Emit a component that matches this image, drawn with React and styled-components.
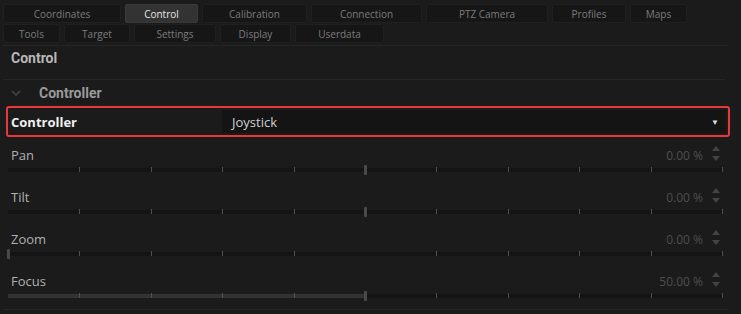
import React from 'react';
import styled, { createGlobalStyle } from 'styled-components';

const TABS_TOP = [
  { name: 'Coordinates', width: 118 },
  { name: 'Control', width: 73, active: true },
  { name: 'Calibration', width: 105 },
  { name: 'Connection', width: 111 },
  { name: 'PTZ Camera', width: 122 },
  { name: 'Profiles', width: 74 },
  { name: 'Maps', width: 57 },
];

const TABS_BOTTOM = [
  { name: 'Tools', width: 57 },
  { name: 'Target', width: 66 },
  { name: 'Settings', width: 82 },
  { name: 'Display', width: 71 },
  { name: 'Userdata', width: 89 },
];

const SLIDERS = [
  { name: 'Pan', value: 0, pos: 50 },
  { name: 'Tilt', value: 0, pos: 50 },
  { name: 'Zoom', value: 0, pos: 0 },
  { name: 'Focus', value: 50, pos: 50, filled: true },
];

const GlobalStyle = createGlobalStyle`
  html, body {
    margin: 0;
    padding: 0;
    background: #1b1b1b;
  }
  body {
    font-family: "Open Sans", "Liberation Sans", sans-serif;
    width: 741px;
    height: 314px;
    overflow: hidden;
  }
`;

const Page = styled.div`
  width: 741px;
  height: 314px;
  background: #1b1b1b;
  padding: 4px 14px 0 3px;
  box-sizing: border-box;
`;

const TabBar = styled.div`
  display: flex;
  flex-direction: column;
  gap: 1px;
  padding-bottom: 2px;
  border-bottom: 1px solid #262626;
`;

const TabRow = styled.div`
  display: flex;
  gap: 4px;
`;

const Tab = styled.div`
  width: ${(p) => p.$width}px;
  height: 19px;
  box-sizing: border-box;
  display: flex;
  align-items: center;
  justify-content: center;
  font-size: 10px;
  border: 1px solid ${(p) => (p.$active ? '#3a3a3a' : '#202020')};
  border-radius: 2px;
  background: ${(p) => (p.$active ? '#333333' : '#161616')};
  color: ${(p) => (p.$active ? '#e6e6e6' : '#7c7c7c')};
`;

const SectionTitle = styled.div`
  height: 34px;
  box-sizing: border-box;
  padding: 2px 0 0 8px;
  line-height: 20px;
  font-family: Roboto, "Liberation Sans", sans-serif;
  font-weight: 700;
  font-size: 14px;
  color: #b8b8b8;
  border-bottom: 1px solid #262626;
  margin-right: 2px;
`;

const GroupHeader = styled.div`
  height: 26px;
  display: flex;
  align-items: center;
  gap: 18px;
  padding-left: 8px;
  font-family: Roboto, "Liberation Sans", sans-serif;
  font-weight: 700;
  font-size: 14px;
  color: #9a9a9a;
`;

const PropertyBox = styled.div`
  height: 31px;
  margin: 0 -3px 0 3px;
  box-sizing: border-box;
  border: 2px solid #e83838;
  border-radius: 3px;
  display: flex;
  align-items: center;
  padding: 0 2px 0 3px;
`;

const PropertyLabel = styled.div`
  width: 211px;
  font-weight: 700;
  font-size: 13px;
  color: #f0f0f0;
`;

const Select = styled.div`
  flex: 1;
  height: 23px;
  background: #141414;
  display: flex;
  align-items: center;
  justify-content: space-between;
  padding: 0 7px 0 10px;
  font-size: 13px;
  color: #d0d0d0;
`;

const Arrow = styled.span`
  font-size: 8px;
  color: #dcdcdc;
`;

const SliderRow = styled.div`
  height: ${(p) => (p.$last ? 47 : 42)}px;
  display: flex;
  flex-direction: column;
  padding: 10px 0 0 5px;
  box-sizing: border-box;
  border-bottom: 1px solid ${(p) => (p.$last ? '#262626' : 'transparent')};
`;

const SliderHead = styled.div`
  height: 16px;
  display: flex;
  align-items: center;
`;

const SliderLabel = styled.div`
  flex: 1;
  font-size: 13px;
  color: #b0b0b0;
  padding-left: 3px;
`;

const SliderValue = styled.div`
  font-size: 12px;
  color: #4e4e4e;
  margin-right: 9px;
`;

const Spinner = styled.div`
  width: 8px;
  display: flex;
  flex-direction: column;
  gap: 5px;
  margin-right: 7px;
  margin-top: -4px;
`;

const Track = styled.div`
  position: relative;
  margin: 5px 5px 0 0;
  height: 4px;
  background: #141414;
`;

const Fill = styled.div`
  position: absolute;
  left: 0;
  top: 0;
  bottom: 0;
  background: #333333;
`;

const Tick = styled.div`
  position: absolute;
  top: -1px;
  width: 1px;
  height: 5px;
  background: #4f4f4f;
`;

const Thumb = styled.div`
  position: absolute;
  top: -3px;
  width: 3px;
  height: 10px;
  margin-left: -1px;
  background: #4a4a4a;
  border-radius: 1px;
`;

const Chevron = () => (
  <svg width="10" height="6" viewBox="0 0 10 6">
    <path d="M1 1 L5 5 L9 1" fill="none" stroke="#444" strokeWidth="1.6" />
  </svg>
);

const Triangle = ({ up }) => (
  <svg width="8" height="5" viewBox="0 0 8 5">
    <path d={up ? 'M0 5 L4 0 L8 5 Z' : 'M0 0 L4 5 L8 0 Z'} fill="#444" />
  </svg>
);

const Slider = ({ name, value, pos, filled, last }) => (
  <SliderRow $last={last}>
    <SliderHead>
      <SliderLabel>{name}</SliderLabel>
      <SliderValue>{value.toFixed(2)} %</SliderValue>
      <Spinner>
        <Triangle up />
        <Triangle />
      </Spinner>
    </SliderHead>
    <Track>
      {filled && <Fill style={{ width: `${pos}%` }} />}
      {[10, 20, 30, 40, 60, 70, 80, 90, 100].map((t) => (
        <Tick key={t} style={{ left: `${t}%` }} />
      ))}
      <Thumb style={{ left: `${pos}%` }} />
    </Track>
  </SliderRow>
);

const App = () => {
  return (
    <>
      <GlobalStyle />
      <Page>
        <TabBar>
          <TabRow>
            {TABS_TOP.map((t) => (
              <Tab key={t.name} $width={t.width} $active={t.active}>
                {t.name}
              </Tab>
            ))}
          </TabRow>
          <TabRow>
            {TABS_BOTTOM.map((t) => (
              <Tab key={t.name} $width={t.width}>
                {t.name}
              </Tab>
            ))}
          </TabRow>
        </TabBar>
        <SectionTitle>Control</SectionTitle>
        <GroupHeader>
          <Chevron />
          Controller
        </GroupHeader>
        <PropertyBox>
          <PropertyLabel>Controller</PropertyLabel>
          <Select>
            Joystick
            <Arrow>▼</Arrow>
          </Select>
        </PropertyBox>
        {SLIDERS.map((s, i) => (
          <Slider key={s.name} {...s} last={i === SLIDERS.length - 1} />
        ))}
      </Page>
    </>
  );
};

export default App;
